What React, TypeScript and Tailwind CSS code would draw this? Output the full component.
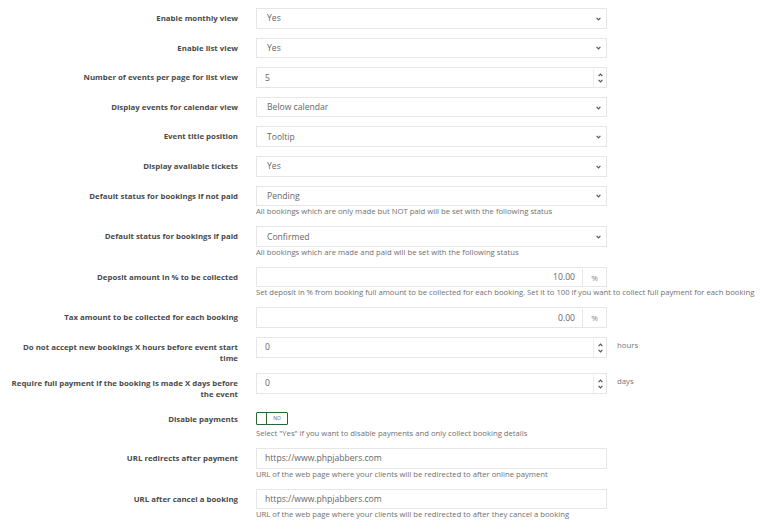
import React from 'react';

type Kind = 'select' | 'number' | 'percent' | 'text' | 'toggle';

interface Row {
  label: string;
  kind: Kind;
  value?: string;
  help?: string;
  suffix?: string;
}

const rows: Row[] = [
  { label: 'Enable monthly view', kind: 'select', value: 'Yes' },
  { label: 'Enable list view', kind: 'select', value: 'Yes' },
  { label: 'Number of events per page for list view', kind: 'number', value: '5' },
  { label: 'Display events for calendar view', kind: 'select', value: 'Below calendar' },
  { label: 'Event title position', kind: 'select', value: 'Tooltip' },
  { label: 'Display available tickets', kind: 'select', value: 'Yes' },
  {
    label: 'Default status for bookings if not paid',
    kind: 'select',
    value: 'Pending',
    help: 'All bookings which are only made but NOT paid will be set with the following status',
  },
  {
    label: 'Default status for bookings if paid',
    kind: 'select',
    value: 'Confirmed',
    help: 'All bookings which are made and paid will be set with the following status',
  },
  {
    label: 'Deposit amount in % to be collected',
    kind: 'percent',
    value: '10.00',
    help: 'Set deposit in % from booking full amount to be collected for each booking. Set it to 100 if you want to collect full payment for each booking',
  },
  { label: 'Tax amount to be collected for each booking', kind: 'percent', value: '0.00' },
  {
    label: 'Do not accept new bookings X hours before event start time',
    kind: 'number',
    value: '0',
    suffix: 'hours',
  },
  {
    label: 'Require full payment if the booking is made X days before the event',
    kind: 'number',
    value: '0',
    suffix: 'days',
  },
  {
    label: 'Disable payments',
    kind: 'toggle',
    help: 'Select "Yes" if you want to disable payments and only collect booking details',
  },
  {
    label: 'URL redirects after payment',
    kind: 'text',
    value: 'https://www.phpjabbers.com',
    help: 'URL of the web page where your clients will be redirected to after online payment',
  },
  {
    label: 'URL after cancel a booking',
    kind: 'text',
    value: 'https://www.phpjabbers.com',
    help: 'URL of the web page where your clients will be redirected to after they cancel a booking',
  },
];

const Chevron = ({ up = false }: { up?: boolean }) => (
  <svg width="5" height="4" viewBox="0 0 5 4" className={up ? 'rotate-180' : ''}>
    <path d="M0.6 0.8 L2.5 2.8 L4.4 0.8" fill="none" stroke="#555" strokeWidth="1.2" />
  </svg>
);

const Field = ({ row }: { row: Row }) => {
  if (row.kind === 'toggle') {
    return (
      <div className="h-[19px] flex items-center">
        <div className="flex h-[13px] w-[32px] border-[1.5px] border-[#2b6630] rounded-[1px] bg-white">
          <div className="w-[10px] border-r-[1.5px] border-[#2b6630]" />
          <div className="flex-1 flex items-center justify-center text-[5px] leading-none text-[#666]">NO</div>
        </div>
      </div>
    );
  }

  const box = 'h-[20.6px] w-[351px] border border-[#e6e6e6] bg-white flex items-center pt-[1px] text-[8.6px] text-[#666]';

  if (row.kind === 'select') {
    return (
      <div className={box}>
        <span className="pl-[10px] flex-1">{row.value}</span>
        <span className="pr-[5px]"><Chevron /></span>
      </div>
    );
  }

  if (row.kind === 'percent') {
    return (
      <div className={box}>
        <span className="flex-1 text-right pr-[7px]">{row.value}</span>
        <span className="w-[24px] h-full border-l border-[#e6e6e6] flex items-center justify-center text-[8px] text-[#888]">%</span>
      </div>
    );
  }

  if (row.kind === 'number') {
    return (
      <div className="flex items-start">
        <div className={box}>
          <span className="pl-[8px] flex-1">{row.value}</span>
          <span className="w-[13px] h-full border-l border-[#eeeeee] flex flex-col items-center justify-center gap-[2px]">
            <Chevron up />
            <Chevron />
          </span>
        </div>
        {row.suffix && (
          <span className="ml-[10px] mt-[3px] text-[7.8px] leading-[11px] text-[#777]">{row.suffix}</span>
        )}
      </div>
    );
  }

  return (
    <div className={box}>
      <span className="pl-[8px]">{row.value}</span>
    </div>
  );
};

export default function App() {
  return (
    <div
      className="w-[763px] h-[529px] bg-white overflow-hidden pt-[8px]"
      style={{ fontFamily: '"Open Sans", "Noto Sans", sans-serif' }}
    >
      <div className="flex flex-col gap-[9px]">
        {rows.map((row) => (
          <div key={row.label} className="flex items-start">
            <div className="w-[228px] ml-[10px] pt-[5px] text-right text-[7.85px] leading-[11px] font-bold text-[#4a4a4a]">
              {row.label}
            </div>
            <div className="ml-[18px] flex-1 flex flex-col items-start">
              <Field row={row} />
              {row.help && (
                <div className="text-[7.7px] leading-[11px] text-[#707070] whitespace-nowrap">{row.help}</div>
              )}
            </div>
          </div>
        ))}
      </div>
    </div>
  );
}
